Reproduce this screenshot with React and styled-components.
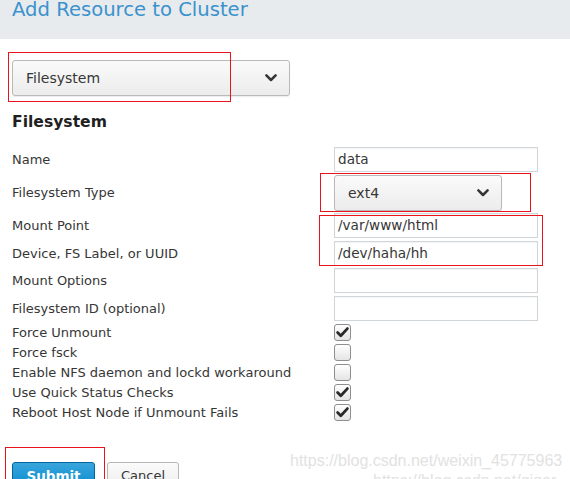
import React from "react";
import styled, { createGlobalStyle } from "styled-components";

const Global = createGlobalStyle`
  html, body { margin: 0; padding: 0; background: #ffffff; }
  body { font-family: "DejaVu Sans", "Liberation Sans", sans-serif; color: #363636; overflow: hidden; }
  * { box-sizing: border-box; }
`;

const Page = styled.div`
  position: relative;
  width: 570px;
  height: 479px;
  overflow: hidden;
  background: #fff;
`;

const Header = styled.div`
  height: 39px;
  background: #e7ebee;
  padding-left: 12px;
  display: flex;
  align-items: flex-start;
`;

const Title = styled.h1`
  margin: 0;
  font-weight: normal;
  font-size: 19.6px;
  line-height: 20px;
  color: #3b92cd;
`;

const Body = styled.div`
  padding: 21px 0 0 12px;
`;

const Anchor = styled.div`
  position: relative;
  width: ${(p) => p.$w || "auto"};
`;

const Mark = styled.div`
  position: absolute;
  left: ${(p) => p.$l}px;
  top: ${(p) => p.$t}px;
  width: ${(p) => p.$w}px;
  height: ${(p) => p.$h}px;
  border: 1px solid #e8141b;
  pointer-events: none;
`;

const SelectBox = styled.div`
  width: ${(p) => p.$w}px;
  height: ${(p) => p.$h}px;
  border: 1px solid #b9b9b9;
  border-radius: 3px;
  background: linear-gradient(to bottom, #fafafa 0%, #ececec 100%);
  box-shadow: 0 1px 1px rgba(0, 0, 0, 0.08);
  display: flex;
  align-items: center;
  justify-content: space-between;
  padding: 0 12px 0 ${(p) => p.$pl}px;
  font-size: 14px;
  color: #363636;
`;

const Chevron = () => (
  <svg width="12" height="8" viewBox="0 0 12 8">
    <path d="M1.4 1.4 L6 6 L10.6 1.4" fill="none" stroke="#363636" strokeWidth="2.5" strokeLinecap="round" strokeLinejoin="round" />
  </svg>
);

const SectionTitle = styled.h2`
  margin: 16.5px 0 0 0;
  font-size: 15.6px;
  line-height: 18px;
  font-weight: bold;
  color: #1f1f1f;
`;

const Form = styled.div`
  position: relative;
  margin-top: 16.5px;
  margin-left: -12px;
  padding-left: 12px;
  display: flex;
  flex-direction: column;
`;

const Row = styled.div`
  display: grid;
  grid-template-columns: 322px 204px;
  align-items: center;
  margin-top: ${(p) => p.$mt}px;
  min-height: ${(p) => (p.$check ? "17px" : "25px")};
`;

const Label = styled.label`
  font-size: 13px;
  color: #363636;
  line-height: 16px;
  white-space: nowrap;
`;

const Input = styled.div`
  height: 25px;
  width: 204px;
  border: 1px solid #d0d5da;
  background: #fff;
  box-shadow: inset 0 1px 1px rgba(0, 0, 0, 0.04);
  font-size: 13.6px;
  line-height: 23px;
  padding-left: 3px;
  color: #363636;
`;

const Box = styled.div`
  width: 17px;
  height: 17px;
  border: 1px solid #8e8e8e;
  border-radius: 3px;
  background: linear-gradient(to bottom, #ffffff 0%, #e4e4e4 100%);
  display: flex;
  align-items: center;
  justify-content: center;
`;

const Check = ({ on }) => (
  <Box>
    {on && (
      <svg width="15" height="15" viewBox="0 0 15 15">
        <path d="M2.6 7.6 L5.8 10.8 L12.4 3.6" fill="none" stroke="#2a2a2a" strokeWidth="2.8" strokeLinecap="round" strokeLinejoin="round" />
      </svg>
    )}
  </Box>
);

const Buttons = styled.div`
  position: relative;
  display: flex;
  gap: 12px;
  margin-top: 41px;
`;

const Button = styled.button`
  font-family: "DejaVu Sans", sans-serif;
  font-size: ${(p) => (p.$primary ? "13.5px" : "13px")};
  font-weight: ${(p) => (p.$primary ? "bold" : "normal")};
  line-height: 18px;
  padding: 4px 0 6px;
  width: ${(p) => p.$w}px;
  border-radius: 3px;
  border: 1px solid ${(p) => (p.$primary ? "#00659c" : "#b7b7b7")};
  color: ${(p) => (p.$primary ? "#ffffff" : "#363636")};
  background: ${(p) =>
    p.$primary
      ? "linear-gradient(to bottom, #39a5dc 0%, #0088ce 100%)"
      : "linear-gradient(to bottom, #fafafa 0%, #ededed 100%)"};
`;

const Watermark = styled.div`
  position: absolute;
  left: ${(p) => p.$l}px;
  top: ${(p) => p.$t}px;
  font-family: "Liberation Sans", Arial, sans-serif;
  font-size: 16px;
  line-height: 18px;
  color: #e2e2e2;
  white-space: nowrap;
  pointer-events: none;
`;

const fields = [
  { label: "Name", type: "input", value: "data", mt: 0 },
  { label: "Filesystem Type", type: "select", value: "ext4", mt: 3 },
  { label: "Mount Point", type: "input", value: "/var/www/html", mt: 2 },
  { label: "Device, FS Label, or UUID", type: "input", value: "/dev/haha/hh", mt: 3 },
  { label: "Mount Options", type: "input", value: "", mt: 2 },
  { label: "Filesystem ID (optional)", type: "input", value: "", mt: 3 },
  { label: "Force Unmount", type: "check", value: true, mt: 3 },
  { label: "Force fsck", type: "check", value: false, mt: 3 },
  { label: "Enable NFS daemon and lockd workaround", type: "check", value: false, mt: 3 },
  { label: "Use Quick Status Checks", type: "check", value: true, mt: 3 },
  { label: "Reboot Host Node if Unmount Fails", type: "check", value: true, mt: 3 },
];

export default function App() {
  return (
    <Page>
      <Global />
      <Header>
        <Title>Add Resource to Cluster</Title>
      </Header>
      <Body>
        <Anchor $w="278px">
          <SelectBox $w={278} $h={36} $pl={13}>
            <span>Filesystem</span>
            <Chevron />
          </SelectBox>
          <Mark $l={-4} $t={-8} $w={223} $h={50} />
        </Anchor>
        <SectionTitle>Filesystem</SectionTitle>
        <Form>
          {fields.map((f) => (
            <Row key={f.label} $check={f.type === "check"} $mt={f.mt}>
              <Label>{f.label}</Label>
              {f.type === "input" && <Input>{f.value}</Input>}
              {f.type === "select" && (
                <Anchor $w="168px">
                  <SelectBox $w={168} $h={36} $pl={13}>
                    <span>{f.value}</span>
                    <Chevron />
                  </SelectBox>
                  <Mark $l={-14} $t={-2} $w={211} $h={39} />
                </Anchor>
              )}
              {f.type === "check" && <Check on={f.value} />}
            </Row>
          ))}
          <Mark $l={319} $t={68} $w={224} $h={51} />
        </Form>
        <Buttons>
          <Button $primary $w={83}>Submit</Button>
          <Button $w={72}>Cancel</Button>
          <Mark $l={-7} $t={-15} $w={100} $h={40} />
        </Buttons>
      </Body>
      <Watermark $l={290} $t={452}>https://blog.csdn.net/weixin_45775963</Watermark>
      <Watermark $l={373} $t={472}>https://blog.csdn.net/qiqer</Watermark>
    </Page>
  );
}
